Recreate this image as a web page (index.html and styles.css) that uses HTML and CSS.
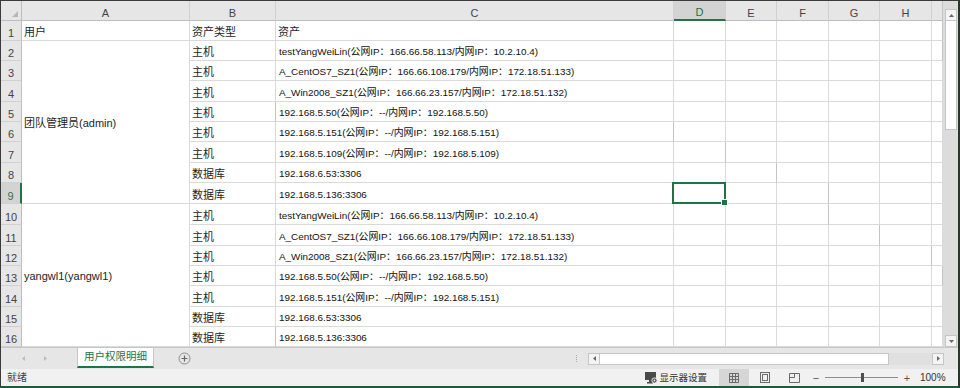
FILE: index.html
```html
<!DOCTYPE html>
<html lang="zh-CN">
<head>
    <meta charset="UTF-8">
    <title>用户权限明细</title>
    <link rel="stylesheet" href="styles.css">
</head>
<body>
<div class="app">
    <div class="main">
        <div class="sheet">
            <!-- column headers -->
            <div class="h corner"></div><div class="h">A</div><div class="h">B</div><div class="h">C</div><div class="h hsel">D</div><div class="h">E</div><div class="h">F</div><div class="h">G</div><div class="h">H</div><div class="h"></div>

            <div class="rh">1</div><div class="c">用户</div><div class="c">资产类型</div><div class="c">资产</div><div class="c"></div><div class="c"></div><div class="c"></div><div class="c"></div><div class="c"></div><div class="c"></div>

            <div class="rh">2</div><div class="c merge m8">团队管理员(admin)</div><div class="c">主机</div><div class="c sm">testYangWeiLin(公网IP：166.66.58.113/内网IP：10.2.10.4)</div><div class="c"></div><div class="c"></div><div class="c"></div><div class="c"></div><div class="c"></div><div class="c"></div>
            <div class="rh">3</div><div class="c">主机</div><div class="c sm">A_CentOS7_SZ1(公网IP：166.66.108.179/内网IP：172.18.51.133)</div><div class="c"></div><div class="c"></div><div class="c"></div><div class="c"></div><div class="c"></div><div class="c"></div>
            <div class="rh">4</div><div class="c">主机</div><div class="c sm">A_Win2008_SZ1(公网IP：166.66.23.157/内网IP：172.18.51.132)</div><div class="c"></div><div class="c"></div><div class="c"></div><div class="c"></div><div class="c"></div><div class="c"></div>
            <div class="rh">5</div><div class="c">主机</div><div class="c sm">192.168.5.50(公网IP：--/内网IP：192.168.5.50)</div><div class="c"></div><div class="c"></div><div class="c"></div><div class="c"></div><div class="c"></div><div class="c"></div>
            <div class="rh">6</div><div class="c">主机</div><div class="c sm">192.168.5.151(公网IP：--/内网IP：192.168.5.151)</div><div class="c"></div><div class="c"></div><div class="c"></div><div class="c"></div><div class="c"></div><div class="c"></div>
            <div class="rh">7</div><div class="c">主机</div><div class="c sm">192.168.5.109(公网IP：--/内网IP：192.168.5.109)</div><div class="c"></div><div class="c"></div><div class="c"></div><div class="c"></div><div class="c"></div><div class="c"></div>
            <div class="rh">8</div><div class="c">数据库</div><div class="c sm">192.168.6.53:3306</div><div class="c"></div><div class="c"></div><div class="c"></div><div class="c"></div><div class="c"></div><div class="c"></div>
            <div class="rh rsel">9</div><div class="c">数据库</div><div class="c sm">192.168.5.136:3306</div><div class="c sel"></div><div class="c"></div><div class="c"></div><div class="c"></div><div class="c"></div><div class="c"></div>

            <div class="rh">10</div><div class="c merge m7">yangwl1(yangwl1)</div><div class="c">主机</div><div class="c sm">testYangWeiLin(公网IP：166.66.58.113/内网IP：10.2.10.4)</div><div class="c"></div><div class="c"></div><div class="c"></div><div class="c"></div><div class="c"></div><div class="c"></div>
            <div class="rh">11</div><div class="c">主机</div><div class="c sm">A_CentOS7_SZ1(公网IP：166.66.108.179/内网IP：172.18.51.133)</div><div class="c"></div><div class="c"></div><div class="c"></div><div class="c"></div><div class="c"></div><div class="c"></div>
            <div class="rh">12</div><div class="c">主机</div><div class="c sm">A_Win2008_SZ1(公网IP：166.66.23.157/内网IP：172.18.51.132)</div><div class="c"></div><div class="c"></div><div class="c"></div><div class="c"></div><div class="c"></div><div class="c"></div>
            <div class="rh">13</div><div class="c">主机</div><div class="c sm">192.168.5.50(公网IP：--/内网IP：192.168.5.50)</div><div class="c"></div><div class="c"></div><div class="c"></div><div class="c"></div><div class="c"></div><div class="c"></div>
            <div class="rh">14</div><div class="c">主机</div><div class="c sm">192.168.5.151(公网IP：--/内网IP：192.168.5.151)</div><div class="c"></div><div class="c"></div><div class="c"></div><div class="c"></div><div class="c"></div><div class="c"></div>
            <div class="rh">15</div><div class="c">数据库</div><div class="c sm">192.168.6.53:3306</div><div class="c"></div><div class="c"></div><div class="c"></div><div class="c"></div><div class="c"></div><div class="c"></div>
            <div class="rh">16</div><div class="c">数据库</div><div class="c sm">192.168.5.136:3306</div><div class="c"></div><div class="c"></div><div class="c"></div><div class="c"></div><div class="c"></div><div class="c"></div>
        </div>

        <!-- vertical scrollbar -->
        <div class="vscroll">
            <div class="sbtn"><svg width="5" height="3" viewBox="0 0 5 3"><path d="M0 3 L2.5 0 L5 3 Z" fill="#666"/></svg></div>
            <div class="vthumb"></div>
            <div class="vtrack"></div>
            <div class="sbtn"><svg width="5" height="3" viewBox="0 0 5 3"><path d="M0 0 L2.5 3 L5 0 Z" fill="#666"/></svg></div>
        </div>
    </div>

    <!-- sheet tabs -->
    <div class="tabbar">
        <div class="nav">
            <svg width="3" height="5" viewBox="0 0 3 5"><path d="M3 0 L0 2.5 L3 5 Z" fill="#bcbcbc"/></svg>
            <svg width="3" height="5" viewBox="0 0 3 5"><path d="M0 0 L3 2.5 L0 5 Z" fill="#bcbcbc"/></svg>
        </div>
        <div class="tab">用户权限明细</div>
        <div class="addsheet">
            <svg width="13" height="13" viewBox="0 0 13 13"><circle cx="6.5" cy="6.5" r="5.5" fill="none" stroke="#8a8a8a"/><path d="M6.5 3.5 V9.5 M3.5 6.5 H9.5" stroke="#666" stroke-width="1.2"/></svg>
        </div>
        <div class="splitter"></div>
        <div class="hscroll">
            <div class="sbtn"><svg width="3" height="5" viewBox="0 0 3 5"><path d="M3 0 L0 2.5 L3 5 Z" fill="#666"/></svg></div>
            <div class="hthumb"></div>
            <div class="htrack"></div>
            <div class="sbtn"><svg width="3" height="5" viewBox="0 0 3 5"><path d="M0 0 L3 2.5 L0 5 Z" fill="#666"/></svg></div>
        </div>
    </div>

    <!-- status bar -->
    <div class="status">
        <span class="ready">就绪</span>
        <div class="disp">
            <svg width="13" height="12" viewBox="0 0 13 12"><rect x="0" y="0" width="11" height="8" fill="#4a4a4a"/><rect x="4" y="8" width="3" height="2" fill="#4a4a4a"/><rect x="2" y="10" width="6" height="1.5" fill="#4a4a4a"/><circle cx="9.5" cy="8.5" r="2.6" fill="#4a4a4a" stroke="#f1f1f1" stroke-width="1"/><circle cx="9.5" cy="8.5" r="0.9" fill="#f1f1f1"/></svg>
            <span>显示器设置</span>
        </div>
        <div class="view on">
            <svg width="10" height="10" viewBox="0 0 10 10"><path d="M0.5 0.5 H9.5 V9.5 H0.5 Z M3.5 0.5 V9.5 M6.5 0.5 V9.5 M0.5 3.5 H9.5 M0.5 6.5 H9.5" fill="none" stroke="#6a6a6a"/></svg>
        </div>
        <div class="view layout">
            <svg width="10" height="11" viewBox="0 0 10 11"><rect x="0.5" y="0.5" width="9" height="10" fill="none" stroke="#6a6a6a"/><rect x="2.5" y="2.5" width="5" height="6" fill="none" stroke="#6a6a6a"/></svg>
        </div>
        <div class="view pbreak">
            <svg width="11" height="10" viewBox="0 0 11 10"><path d="M0.5 0.5 H10.5 V9.5 H0.5 Z M5.5 0.5 V4.5 H0.5" fill="none" stroke="#6a6a6a"/></svg>
        </div>
        <span class="zbtn minus">−</span>
        <div class="slider"><div class="knob"></div></div>
        <span class="zbtn plus">+</span>
        <span class="pct">100%</span>
    </div>
</div>
</body>
</html>
```

FILE: styles.css
```css
* { box-sizing: border-box; }
body { margin: 0; background: #fff; font-family: "Liberation Sans", "Noto Sans CJK SC", sans-serif; font-size: 11px; color: #1e1e1e; }

.app { width: 960px; height: 388px; display: flex; flex-direction: column; overflow: hidden;
       border-top: 1px solid #3b3b3b; border-left: 1px solid #3b3b3b; border-right: 2px solid #26382d; border-bottom: 2px solid #1f5a37; }

/* grid */
.main { display: flex; height: 346px; flex: none; }
.sheet { display: grid;
         grid-template-columns: 21px 168px 86px 398px 52px 51px 52px 51px 52px 11px;
         grid-template-rows: 20px 20px 20px 20px 21px 20px 20px 21px 20px 21px 21px 21px 20px 20px 21px 20px 20px; }
.h { background: #e6e6e6; border-right: 1px solid #d0d0d0; border-bottom: 1px solid #bdbdbd; color: #444;
     display: flex; align-items: center; justify-content: center; padding-top: 4px; font-size: 11px; }
.corner { position: relative; border-right-color: #bdbdbd; }
.corner::after { content: ""; position: absolute; right: 3px; bottom: 3px; border-style: solid; border-width: 0 0 6px 6px;
                 border-color: transparent transparent #b8b8b8 transparent; }
.hsel { background: #d3d3d3; color: #217346; border-bottom: 2px solid #217346; }
.rh { background: #e6e6e6; border-right: 1px solid #bdbdbd; border-bottom: 1px solid #d0d0d0; color: #444;
      display: flex; align-items: flex-end; justify-content: center; padding-bottom: 0; line-height: 13px; }
.rsel { background: #d3d3d3; color: #3e6b50; border-right: 2px solid #217346; }
.c { border-right: 1px solid #dadada; border-bottom: 1px solid #dadada; display: flex; align-items: flex-end;
     padding: 0 2px 1px 2px; line-height: 13px; white-space: nowrap; overflow: hidden; }
.c.sm { font-size: 9.9px; padding-left: 3px; padding-bottom: 2px; color: #111; }
.merge { align-items: center; padding-bottom: 0; padding-top: 2px; }
.m8 { grid-row: span 8; }
.m7 { grid-row: span 7; }
.sheet > :nth-child(10n) { border-right-color: #c4c4c4; }
.sel { position: relative; overflow: visible; }
.sel::before { content: ""; position: absolute; left: -2px; top: -1px; right: -1px; bottom: -1px; border: 2px solid #217346; }
.sel::after { content: ""; position: absolute; right: -3px; bottom: -3px; width: 5px; height: 5px; background: #217346; border: 1px solid #fff; }

/* scrollbars */
.vscroll { width: 15px; background: #dcdcdc; display: flex; flex-direction: column; padding: 8px 1px 0 2px; }
.sbtn { width: 12px; height: 12px; background: #f4f4f4; border: 1px solid #c6c6c6; display: flex; align-items: center; justify-content: center; flex: none; }
.vthumb { height: 109px; background: #fff; border: 1px solid #c6c6c6; border-top: none; }
.vtrack { flex: 1; }

/* tabs */
.tabbar { height: 22px; flex: none; background: #e6e6e6; border-top: 1px solid #c6c6c6; display: flex; align-items: center; }
.nav { width: 76px; display: flex; gap: 19px; padding-left: 21px; }
.tab { width: 77px; height: 20px; align-self: flex-start; background: #fff; color: #217346; text-align: center; line-height: 17px; font-size: 10.5px;
       border-left: 1px solid #c6c6c6; border-right: 1px solid #c6c6c6; border-bottom: 2px solid #217346; }
.addsheet { margin-left: 24px; display: flex; }
.splitter { margin-left: auto; width: 1px; height: 7px; border-left: 1px dotted #a8a8a8; margin-right: 11px; }
.hscroll { width: 356px; height: 12px; display: flex; margin-right: 14px; }
.hthumb { width: 289px; background: #fff; border: 1px solid #c6c6c6; border-left: none; }
.htrack { flex: 1; background: #e0e0e0; }

/* status bar */
.status { height: 17px; flex: none; overflow: hidden; background: #f1f1f1; display: flex; align-items: center;
          font-size: 10px; line-height: 12px; color: #444; padding-right: 13px; }
.ready { padding-left: 6px; }
.disp { margin-left: auto; display: flex; align-items: center; gap: 1px; flex: none; white-space: nowrap; font-size: 9.5px; color: #333; }
.view { display: flex; align-items: center; justify-content: center; height: 100%; flex: none; }
.view.on { margin-left: 12px; width: 30px; background: #d6d6d6; }
.view.layout { margin-left: 11px; width: 10px; }
.view.pbreak { margin-left: 19px; width: 11px; }
.zbtn { width: 8px; flex: none; text-align: center; font-size: 11px; line-height: 12px; color: #555; font-family: "Liberation Sans", sans-serif; }
.minus { margin-left: 12px; }
.slider { margin-left: 5px; width: 73px; flex: none; height: 1px; background: #8e8e8e; position: relative; }
.knob { position: absolute; left: 36px; top: -4px; width: 3px; height: 9px; background: #4e4e4e; }
.plus { margin-left: 5px; }
.pct { margin-left: 9px; width: 25px; flex: none; font-size: 10px; color: #333; }
```
